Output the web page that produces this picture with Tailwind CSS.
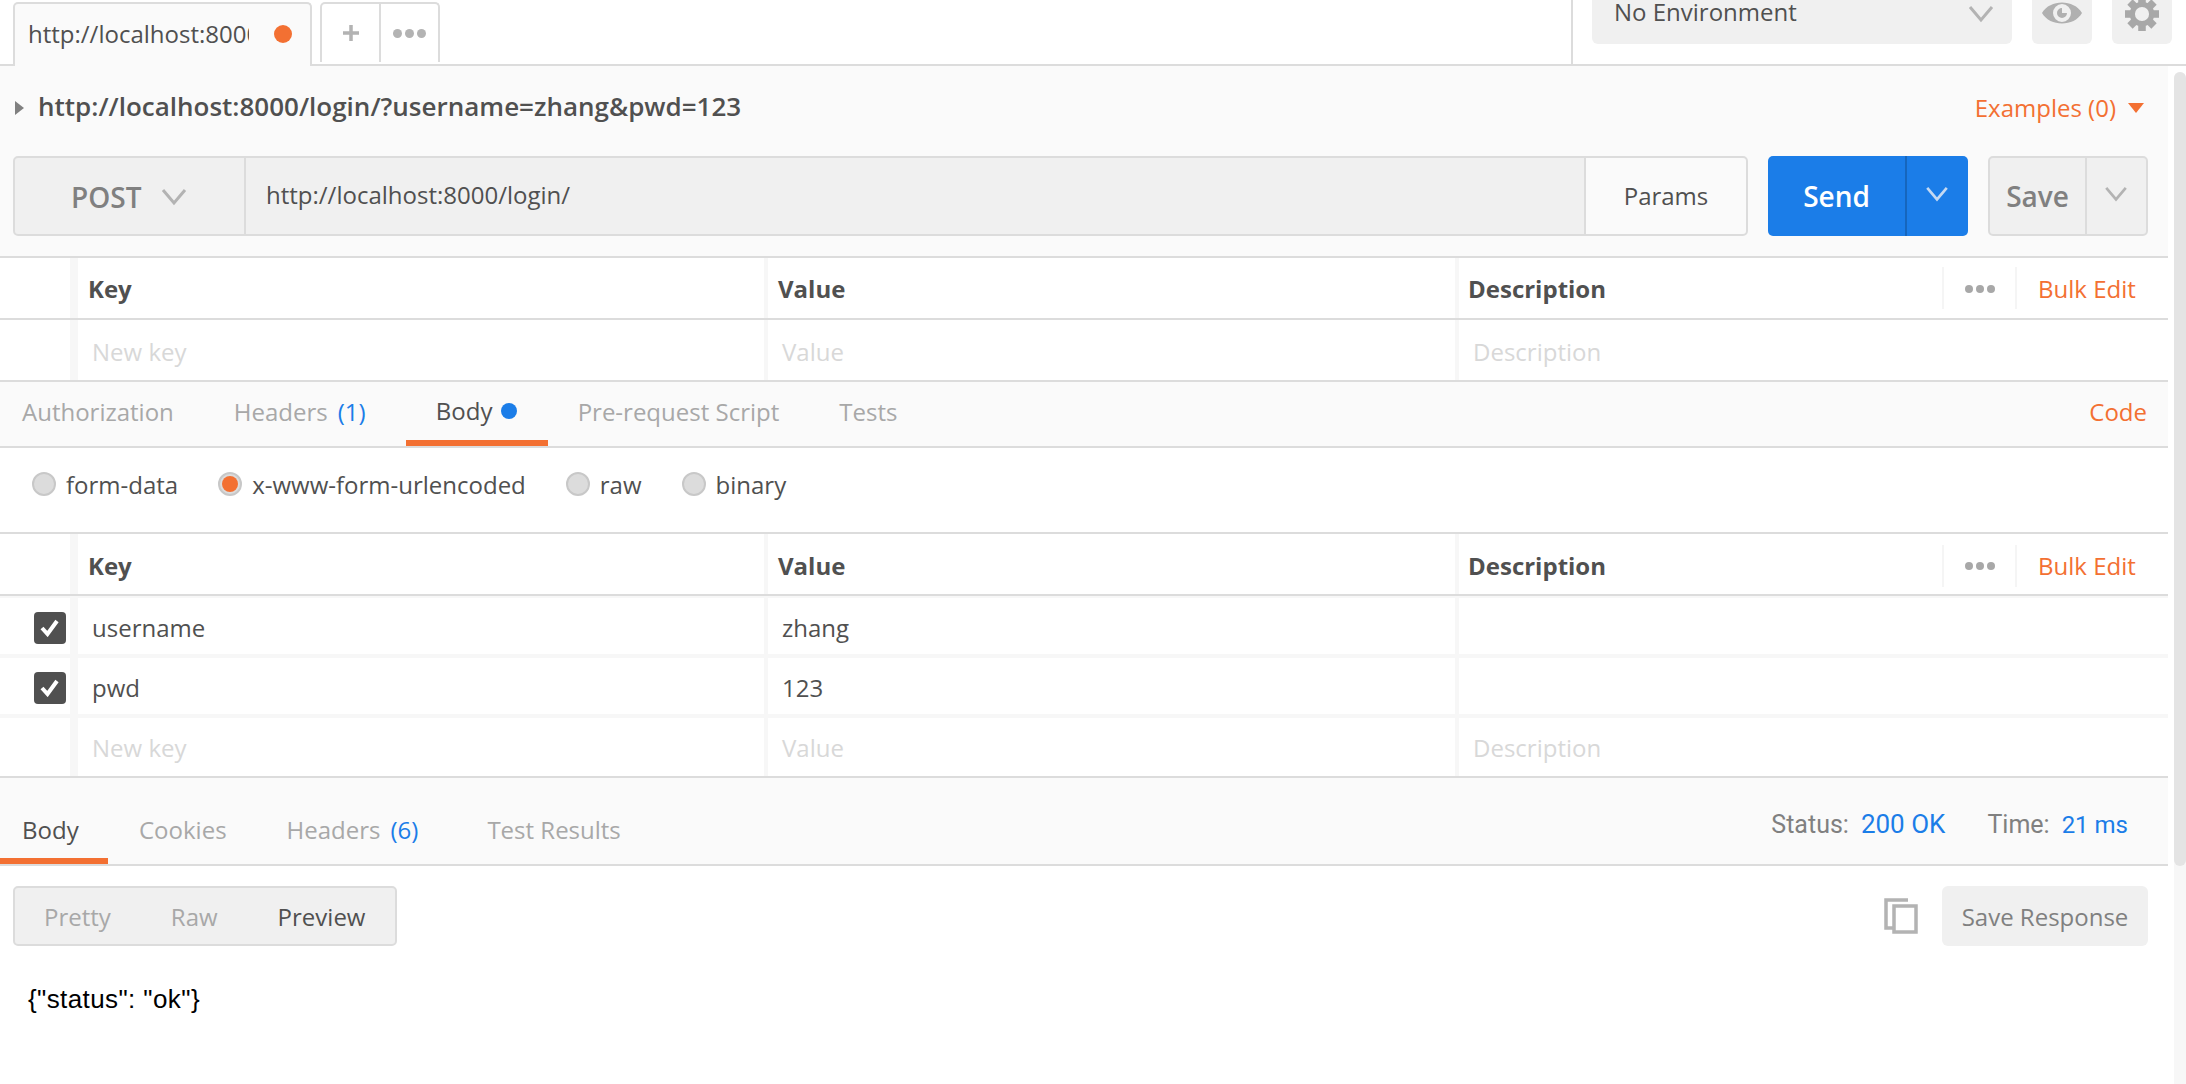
<!DOCTYPE html>
<html lang="en">
<head>
  <meta charset="UTF-8" />
  <title>Postman request</title>
  <script src="https://cdn.jsdelivr.net/npm/@tailwindcss/browser@4"></script>
</head>
<body class="w-[2186px] h-[1084px] overflow-hidden bg-white font-['Open_Sans',sans-serif] text-[24px] text-[#505050]">

  <!-- top bar -->
  <header class="h-[66px] flex border-b-2 border-[#dcdcdc] bg-white">
    <div class="ml-[13px] mt-[2px] w-[299px] h-[64px] flex items-center pl-[13px] pb-[3px] bg-[#fafafa] border-2 border-b-0 border-[#dcdcdc] rounded-t-[5px]">
      <span class="w-[221px] overflow-hidden whitespace-nowrap">http://localhost:8000/login/</span>
      <span class="ml-[25px] w-[18px] h-[18px] rounded-full bg-[#f37032]"></span>
    </div>
    <div class="ml-[8px] mt-[2px] w-[120px] h-[60px] flex border-2 border-b-0 border-[#dcdcdc] rounded-t-[5px]">
      <div class="w-[59px] flex items-center justify-center border-r-2 border-[#dcdcdc]">
        <svg width="18" height="18" viewBox="0 0 18 18"><path d="M9 1v16M1 9h16" stroke="#b3b3b3" stroke-width="3.5"/></svg>
      </div>
      <div class="flex-1 flex items-center justify-center gap-[3px]">
        <span class="w-[9px] h-[9px] rounded-full bg-[#b3b3b3]"></span><span class="w-[9px] h-[9px] rounded-full bg-[#b3b3b3]"></span><span class="w-[9px] h-[9px] rounded-full bg-[#b3b3b3]"></span>
      </div>
    </div>
    <div class="ml-[1131px] w-[2px] h-[64px] bg-[#dcdcdc]"></div>
    <div class="ml-[19px] w-[420px] h-[44px] flex items-center justify-between pl-[22px] pr-[18px] pb-[20px] bg-[#f0f0f0] rounded-b-[6px]">
      <span class="leading-[24px]">No Environment</span>
      <svg class="mt-[3px]" width="26" height="18" viewBox="0 0 26 18" fill="none"><path d="M2 2l11 13L24 2" stroke="#b3b3b3" stroke-width="3"/></svg>
    </div>
    <div class="ml-[20px] w-[60px] h-[44px] flex justify-center pt-[2px] bg-[#f0f0f0] rounded-b-[6px]">
      <svg width="40" height="22" viewBox="0 0 40 22"><path fill-rule="evenodd" fill="#b0b0b0" d="M0 11C8-3 32-3 40 11 32 25 8 25 0 11zM20 2a9 9 0 1 0 0 18 9 9 0 0 0 0-18z"/><path fill="#b0b0b0" d="M20 6a5 5 0 1 0 5 5h-5z"/></svg>
    </div>
    <div class="ml-[20px] w-[60px] h-[44px] flex justify-center overflow-hidden bg-[#f0f0f0] rounded-b-[6px]">
      <svg class="-mt-[3px] shrink-0" width="34" height="34" viewBox="0 0 36 36"><g fill="#a8a8a8"><circle cx="18" cy="18" r="13"/><rect x="14" y="0" width="8" height="36"/><rect x="14" y="0" width="8" height="36" transform="rotate(45 18 18)"/><rect x="14" y="0" width="8" height="36" transform="rotate(90 18 18)"/><rect x="14" y="0" width="8" height="36" transform="rotate(135 18 18)"/></g><circle cx="18" cy="18" r="7.5" fill="#f0f0f0"/></svg>
    </div>
  </header>

  <div class="flex">
    <main class="w-[2168px]">
      <!-- request title -->
      <div class="h-[192px] bg-[#fafafa] border-b-2 border-[#dcdcdc] pt-[24px]">
        <div class="h-[36px] flex items-center pl-[15px] pr-[24px]">
          <span class="w-0 h-0 border-y-[7px] border-y-transparent border-l-[9px] border-l-[#808080]"></span>
          <span class="ml-[14px] mb-[3px] text-[26px] font-semibold">http://localhost:8000/login/?username=zhang&amp;pwd=123</span>
          <span class="ml-auto text-[#f37032]">Examples (0)</span>
          <span class="ml-[12px] w-0 h-0 border-x-[8px] border-x-transparent border-t-[10px] border-t-[#f37032]"></span>
        </div>
        <!-- url bar -->
        <div class="mt-[30px] flex pl-[13px] pr-[20px]">
          <div class="w-[1735px] h-[80px] flex bg-[#f0f0f0] border-2 border-[#dcdcdc] rounded-[5px]">
            <div class="w-[231px] flex items-center pl-[56px] pt-[2px] gap-[20px] border-r-2 border-[#dcdcdc] font-semibold text-[#808080] text-[28px]">
              POST
              <svg width="26" height="18" viewBox="0 0 26 18" fill="none"><path d="M2 2l11 13L24 2" stroke="#b3b3b3" stroke-width="3"/></svg>
            </div>
            <div class="flex-1 flex items-center pl-[20px] pb-[2px]">http://localhost:8000/login/</div>
            <div class="w-[162px] flex items-center justify-center bg-[#fafafa] border-l-2 border-[#dcdcdc] rounded-r-[4px]">Params</div>
          </div>
          <div class="ml-[20px] w-[200px] h-[80px] flex bg-[#1b7de8] rounded-[5px] text-white font-semibold text-[28px]">
            <div class="w-[139px] flex items-center justify-center border-r-2 border-[#1666bd]">Send</div>
            <div class="flex-1 flex items-center justify-center pb-[4px] pr-[2px]">
              <svg width="24" height="16" viewBox="0 0 26 18" fill="none"><path d="M2 2l11 13L24 2" stroke="#c4d9f2" stroke-width="3"/></svg>
            </div>
          </div>
          <div class="ml-[20px] w-[160px] h-[80px] flex bg-[#f0f0f0] border-2 border-[#dcdcdc] rounded-[5px] font-semibold text-[#808080] text-[28px]">
            <div class="w-[97px] flex items-center justify-center border-r-2 border-[#dcdcdc]">Save</div>
            <div class="flex-1 flex items-center justify-center pb-[4px] pr-[2px]">
              <svg width="24" height="16" viewBox="0 0 26 18" fill="none"><path d="M2 2l11 13L24 2" stroke="#b3b3b3" stroke-width="3"/></svg>
            </div>
          </div>
        </div>
      </div>

      <!-- params table -->
      <div class="h-[62px] flex items-center font-bold border-b-2 border-[#dcdcdc]">
        <div class="w-[78px] h-full border-r-[8px] border-[#f7f7f7]"></div>
        <div class="w-[690px] h-full flex items-center pl-[10px] pt-[2px] border-r-[4px] border-[#f7f7f7]">Key</div>
        <div class="w-[691px] h-full flex items-center pl-[10px] pt-[2px] border-r-[4px] border-[#f7f7f7]">Value</div>
        <div class="w-[485px] h-[42px] flex items-center pl-[9px] pt-[2px] border-r-2 border-[#f5f5f5]">Description</div>
        <div class="w-[73px] h-[42px] flex items-center justify-center gap-[3px] pt-[2px] border-r-2 border-[#f5f5f5]">
          <span class="w-[8px] h-[8px] rounded-full bg-[#a8a8a8]"></span><span class="w-[8px] h-[8px] rounded-full bg-[#a8a8a8]"></span><span class="w-[8px] h-[8px] rounded-full bg-[#a8a8a8]"></span>
        </div>
        <div class="flex-1 pl-[21px] pt-[2px] font-normal text-[#f37032]">Bulk Edit</div>
      </div>
      <div class="h-[62px] flex items-center text-[#d8d8d8] border-b-2 border-[#dcdcdc]">
        <div class="w-[78px] h-full border-r-[8px] border-[#f7f7f7]"></div>
        <div class="w-[690px] h-full flex items-center pl-[14px] pt-[3px] border-r-[4px] border-[#f7f7f7]">New key</div>
        <div class="w-[691px] h-full flex items-center pl-[14px] pt-[3px] border-r-[4px] border-[#f7f7f7]">Value</div>
        <div class="flex-1 h-full flex items-center pl-[14px] pt-[3px]">Description</div>
      </div>

      <!-- request tabs -->
      <nav class="h-[66px] flex items-center bg-[#fafafa] border-b-2 border-[#dcdcdc] text-[#a8a8a8]">
        <span class="ml-[22px] mb-[5px]">Authorization</span>
        <span class="ml-[60px] mb-[5px]">Headers</span>
        <span class="ml-[10px] mb-[5px] text-[#1b7de8]">(1)</span>
        <div class="ml-[40px] w-[142px] h-full flex items-center justify-center gap-[9px] border-b-[6px] border-[#f37032] text-[#505050]">
          Body <span class="w-[16px] h-[16px] rounded-full bg-[#1b7de8]"></span>
        </div>
        <span class="ml-[30px] mb-[5px]">Pre-request Script</span>
        <span class="ml-[60px] mb-[5px]">Tests</span>
        <span class="ml-auto mr-[21px] mb-[5px] text-[#f37032]">Code</span>
      </nav>

      <!-- body type -->
      <div class="h-[86px] flex items-center border-b-2 border-[#dcdcdc] pb-[12px]">
        <span class="ml-[32px] w-[24px] h-[24px] rounded-full bg-[#dcdcdc] border-2 border-[#c8c8c8]"></span>
        <span class="ml-[10px] mt-[2px]">form-data</span>
        <span class="ml-[40px] w-[24px] h-[24px] rounded-full flex items-center justify-center bg-[#dcdcdc] border-2 border-[#c8c8c8]"><span class="w-[16px] h-[16px] rounded-full bg-[#f37032]"></span></span>
        <span class="ml-[10px] mt-[2px]">x-www-form-urlencoded</span>
        <span class="ml-[40px] w-[24px] h-[24px] rounded-full bg-[#dcdcdc] border-2 border-[#c8c8c8]"></span>
        <span class="ml-[10px] mt-[2px]">raw</span>
        <span class="ml-[40px] w-[24px] h-[24px] rounded-full bg-[#dcdcdc] border-2 border-[#c8c8c8]"></span>
        <span class="ml-[10px] mt-[2px]">binary</span>
      </div>

      <!-- body table -->
      <div class="h-[62px] flex items-center font-bold border-b-2 border-[#dcdcdc]">
        <div class="w-[78px] h-full border-r-[8px] border-[#f7f7f7]"></div>
        <div class="w-[690px] h-full flex items-center pl-[10px] pt-[3px] border-r-[4px] border-[#f7f7f7]">Key</div>
        <div class="w-[691px] h-full flex items-center pl-[10px] pt-[3px] border-r-[4px] border-[#f7f7f7]">Value</div>
        <div class="w-[485px] h-[42px] flex items-center pl-[9px] mt-[3px] border-r-2 border-[#f5f5f5]">Description</div>
        <div class="w-[73px] h-[42px] flex items-center justify-center gap-[3px] mt-[3px] border-r-2 border-[#f5f5f5]">
          <span class="w-[8px] h-[8px] rounded-full bg-[#a8a8a8]"></span><span class="w-[8px] h-[8px] rounded-full bg-[#a8a8a8]"></span><span class="w-[8px] h-[8px] rounded-full bg-[#a8a8a8]"></span>
        </div>
        <div class="flex-1 pl-[21px] mt-[3px] font-normal text-[#f37032]">Bulk Edit</div>
      </div>
      <div class="h-[62px] flex items-center border-y-[2px] border-b-[4px] border-[#f7f7f7]">
        <div class="w-[78px] h-full flex items-center pl-[34px] pt-[3px] border-r-[8px] border-[#f7f7f7]">
          <span class="w-[32px] h-[32px] flex items-center justify-center rounded-[4px] bg-[#505050]"><svg width="20" height="18" viewBox="0 0 20 18" fill="none"><path d="M2 9l5.500 6L17 2" stroke="#fff" stroke-width="4"/></svg></span>
        </div>
        <div class="w-[690px] h-full flex items-center pl-[14px] pt-[3px] border-r-[4px] border-[#f7f7f7]">username</div>
        <div class="w-[691px] h-full flex items-center pl-[14px] pt-[3px] border-r-[4px] border-[#f7f7f7]">zhang</div>
      </div>
      <div class="h-[60px] flex items-center border-b-[4px] border-[#f7f7f7]">
        <div class="w-[78px] h-full flex items-center pl-[34px] pt-[3px] border-r-[8px] border-[#f7f7f7]">
          <span class="w-[32px] h-[32px] flex items-center justify-center rounded-[4px] bg-[#505050]"><svg width="20" height="18" viewBox="0 0 20 18" fill="none"><path d="M2 9l5.500 6L17 2" stroke="#fff" stroke-width="4"/></svg></span>
        </div>
        <div class="w-[690px] h-full flex items-center pl-[14px] pt-[3px] border-r-[4px] border-[#f7f7f7]">pwd</div>
        <div class="w-[691px] h-full flex items-center pl-[14px] pt-[3px] border-r-[4px] border-[#f7f7f7]">123</div>
      </div>
      <div class="h-[60px] flex items-center text-[#d8d8d8] border-b-2 border-[#dcdcdc]">
        <div class="w-[78px] h-full border-r-[8px] border-[#f7f7f7]"></div>
        <div class="w-[690px] h-full flex items-center pl-[14px] pt-[2px] border-r-[4px] border-[#f7f7f7]">New key</div>
        <div class="w-[691px] h-full flex items-center pl-[14px] pt-[2px] border-r-[4px] border-[#f7f7f7]">Value</div>
        <div class="flex-1 h-full flex items-center pl-[14px] pt-[2px]">Description</div>
      </div>

      <!-- response tabs -->
      <nav class="h-[88px] flex items-end bg-[#fafafa] border-b-2 border-[#dcdcdc] text-[#a8a8a8]">
        <div class="w-[108px] h-[56px] flex items-center pl-[22px] pb-[7px] border-b-[6px] border-[#f37032] text-[#505050]">Body</div>
        <div class="h-[56px] flex items-center pb-[13px]">
          <span class="ml-[31px]">Cookies</span>
          <span class="ml-[60px]">Headers</span>
          <span class="ml-[10px] text-[#1b7de8]">(6)</span>
          <span class="ml-[69px]">Test Results</span>
        </div>
        <div class="ml-auto h-full flex items-baseline pt-[27px] pr-[40px] font-['Roboto',sans-serif] text-[25px] text-[#808080]">
          Status:
          <span class="ml-[12px] text-[26px] text-[#1b7de8]">200 OK</span>
          <span class="ml-[42px]">Time:</span>
          <span class="ml-[12px] text-[24px] text-[#1b7de8]">21 ms</span>
        </div>
      </nav>

      <!-- response -->
      <div class="pt-[20px] pr-[20px] flex items-start">
        <div class="ml-[13px] w-[384px] h-[60px] flex items-center pt-[2px] bg-[#f0f0f0] border-2 border-[#dcdcdc] rounded-[5px] text-[#a8a8a8]">
          <span class="ml-[29px]">Pretty</span>
          <span class="ml-[60px]">Raw</span>
          <span class="ml-[60px] text-[#505050]">Preview</span>
        </div>
        <svg class="ml-auto mt-[12px]" width="34" height="36" viewBox="0 0 34 36" fill="none"><path d="M24 2H2v28h8" stroke="#b3b3b3" stroke-width="3.500" fill="none"/><rect x="10" y="8" width="22" height="26" stroke="#b3b3b3" stroke-width="3.500" fill="#fff"/></svg>
        <div class="ml-[24px] w-[206px] h-[60px] flex items-center justify-center pt-[2px] bg-[#f0f0f0] rounded-[6px] text-[#808080]">Save Response</div>
      </div>
      <p class="mt-[34px] ml-[28px] font-['Liberation_Sans',sans-serif] text-[26px] tracking-[0.4px] text-black">{"status": "ok"}</p>
    </main>

    <!-- scrollbar -->
    <div class="ml-[6px] w-[12px] mt-[6px] h-[1012px] rounded-t-[6px] bg-[#f7f7f7]">
      <div class="h-[794px] rounded-[6px] bg-[#e4e4e4]"></div>
    </div>
  </div>
</body>
</html>
